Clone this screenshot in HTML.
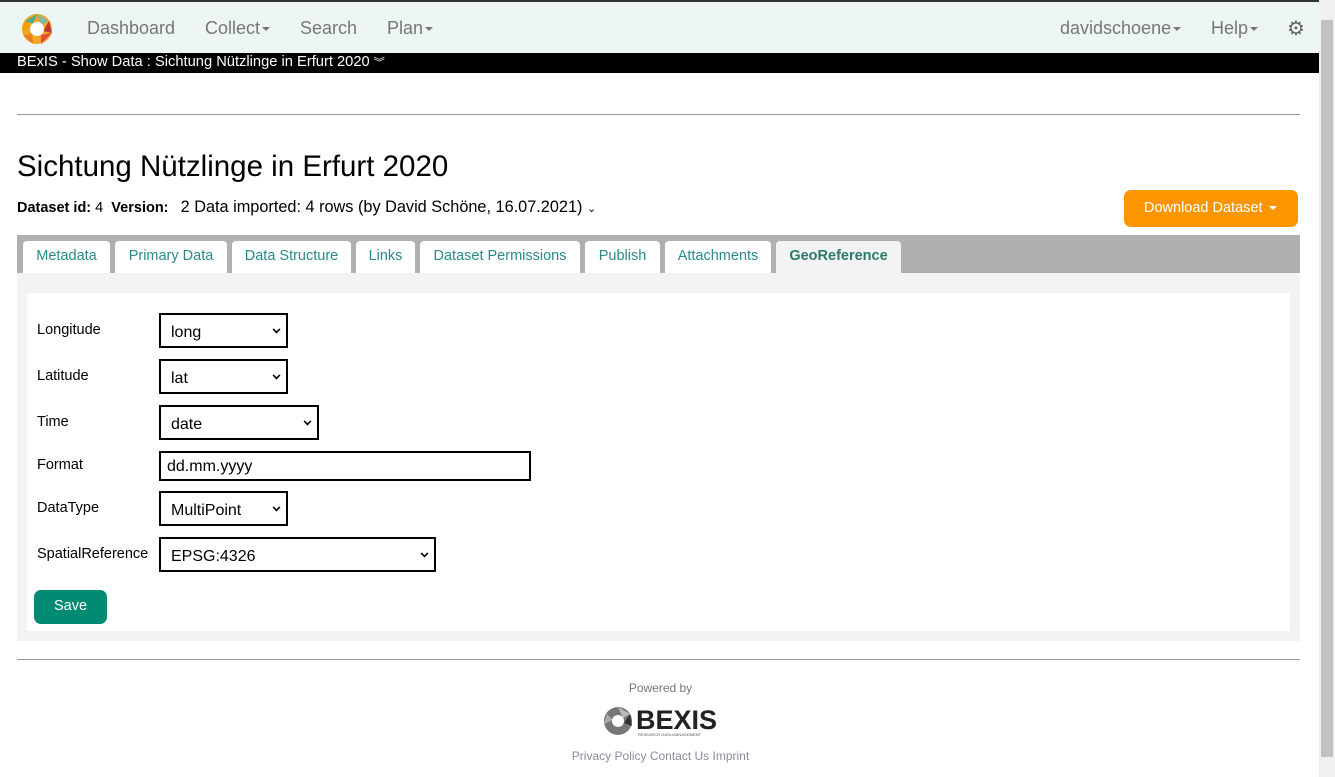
<!DOCTYPE html>
<html><head><meta charset="utf-8"><style>
*{box-sizing:border-box;margin:0;padding:0}
body{width:1335px;height:777px;overflow:hidden;font-family:"Liberation Sans",Arial,sans-serif;background:#fff;position:relative;color:#000}
.abs{position:absolute}
.nav{left:0;top:0;width:1319px;height:53px;background:#eef5f5;border-top:2px solid #333}
.nav span{position:absolute;top:16px;font-size:18px;color:#777}
.car{display:inline-block;width:0;height:0;border-left:4px solid transparent;border-right:4px solid transparent;border-top:4px solid #777;vertical-align:middle;margin-left:2px}
.bar{left:0;top:53px;width:1319px;height:20px;background:#000;color:#fff;font-size:14.7px;padding:1px 0 0 17px}
.sb{left:1319px;top:0;width:16px;height:777px;background:#f0f0f0}
.sbt{left:1321px;top:20px;width:12px;height:737px;background:#c1c1c1}
.tabs{left:17px;top:235px;width:1283px;height:38px;background:#b0b0b0}
.tab{position:absolute;top:241px;height:32px;background:#fff;border-radius:4px 4px 0 0;font-size:14.5px;color:#2a8a8a;padding-top:7px;text-align:center}
.lbl{position:absolute;left:37px;font-size:14.5px}
.sel{position:absolute;left:159px;height:35px;border:2px solid #000;background:#fff;font-size:16px;padding:9px 0 0 10px}
.sel i{position:absolute;right:6px;top:11px;width:7px;height:7px;border-right:2px solid #000;border-bottom:2px solid #000;transform:rotate(45deg) scale(.8)}
</style></head><body>
<div class="abs nav">
<svg class="abs" style="left:21px;top:11px" width="32" height="32" viewBox="0 0 32 32">
<circle cx="16" cy="16" r="15" fill="#f5a623"/>
<path d="M16 1 L28 8 L20 12 Z" fill="#7fb8a0"/><path d="M4 8 L16 1 L12 11Z" fill="#5aa88a"/>
<path d="M28 8 L31 20 L22 18Z" fill="#c0392b"/><path d="M31 20 L20 31 L20 22Z" fill="#e74c3c"/>
<path d="M1 18 L4 8 L11 14Z" fill="#f39c12"/><path d="M2 22 L12 31 L11 21Z" fill="#e67e22"/>
<circle cx="16" cy="16" r="7" fill="#fff"/></svg>
<span style="left:87px">Dashboard</span>
<span style="left:205px">Collect<i class="car"></i></span>
<span style="left:300px">Search</span>
<span style="left:387px">Plan<i class="car"></i></span>
<span style="left:1060px">davidschoene<i class="car"></i></span>
<span style="left:1211px">Help<i class="car"></i></span>
<span style="left:1287px;top:14px;font-size:20px;color:#666">⚙</span>
</div>
<div class="abs bar">BExIS - Show Data : Sichtung Nützlinge in Erfurt 2020 <span style="font-size:11px">︾</span></div>
<div class="abs sb"></div><div class="abs sbt"></div>
<div class="abs" style="left:17px;top:114px;width:1283px;height:1px;background:#999"></div>
<div class="abs" style="left:17px;top:150px;font-size:29.5px">Sichtung Nützlinge in Erfurt 2020</div>
<div class="abs" style="left:17px;top:198px;font-size:14.5px"><b>Dataset id:</b> 4 &nbsp;<b>Version:</b> &nbsp; <span style="font-size:16.3px">2 Data imported: 4 rows (by David Schöne, 16.07.2021) <span style="font-size:11px">&#x2304;</span></span></div>
<div class="abs" style="left:1124px;top:190px;width:174px;height:37px;background:#fb9600;border-radius:7px;color:#fff;font-size:14.5px;padding-top:10px;padding-left:20px">Download Dataset <i class="car" style="border-top-color:#fff"></i></div>
<div class="abs tabs"></div>
<div class="tab" style="left:23px;width:87px">Metadata</div>
<div class="tab" style="left:115px;width:112px">Primary Data</div>
<div class="tab" style="left:232px;width:119px">Data Structure</div>
<div class="tab" style="left:356px;width:59px">Links</div>
<div class="tab" style="left:420px;width:160px">Dataset Permissions</div>
<div class="tab" style="left:585px;width:75px">Publish</div>
<div class="tab" style="left:665px;width:106px">Attachments</div>
<div class="tab" style="left:776px;width:125px;background:#f3f3f3;font-weight:bold;color:#2a7a6a">GeoReference</div>
<div class="abs" style="left:17px;top:273px;width:1283px;height:368px;background:#f3f3f3"></div>
<div class="abs" style="left:27px;top:293px;width:1263px;height:338px;background:#fff"></div>
<div class="lbl" style="top:322px">Longitude</div>
<div class="sel" style="top:313px;width:129px">long<i></i></div>
<div class="lbl" style="top:368px">Latitude</div>
<div class="sel" style="top:359px;width:129px">lat<i></i></div>
<div class="lbl" style="top:414px">Time</div>
<div class="sel" style="top:405px;width:160px">date<i></i></div>
<div class="lbl" style="top:457px">Format</div>
<div class="sel" style="top:451px;width:372px;height:30px;padding:5px 0 0 6px">dd.mm.yyyy</div>
<div class="lbl" style="top:500px">DataType</div>
<div class="sel" style="top:491px;width:129px">MultiPoint<i></i></div>
<div class="lbl" style="top:546px">SpatialReference</div>
<div class="sel" style="top:537px;width:277px">EPSG:4326<i></i></div>
<div class="abs" style="left:34px;top:590px;width:73px;height:34px;background:#008b72;border-radius:7px;color:#fff;font-size:14.5px;text-align:center;padding-top:8px">Save</div>
<div class="abs" style="left:17px;top:659px;width:1283px;height:1px;background:#999"></div>
<div class="abs" style="left:0;top:681px;width:1321px;text-align:center;font-size:12px;color:#777">Powered by</div>
<svg class="abs" style="left:603px;top:706px" width="30" height="30" viewBox="0 0 30 30"><circle cx="15" cy="15" r="14" fill="#777"/><path d="M15 1 L27 8 L20 12Z" fill="#bbb"/><path d="M27 8 L29 20 L21 17Z" fill="#333"/><path d="M1 18 L4 8 L10 14Z" fill="#aaa"/><circle cx="15" cy="15" r="6" fill="#fff"/></svg>
<div class="abs" style="left:636px;top:705px;font-size:27px;font-weight:bold;color:#222;letter-spacing:0">BEXIS</div>
<div class="abs" style="left:638px;top:732px;font-size:4px;color:#555">RESEARCH DATA MANAGEMENT</div>
<div class="abs" style="left:0;top:749px;width:1321px;text-align:center;font-size:12px;color:#8a8aa0">Privacy Policy Contact Us Imprint</div>
</body></html>
